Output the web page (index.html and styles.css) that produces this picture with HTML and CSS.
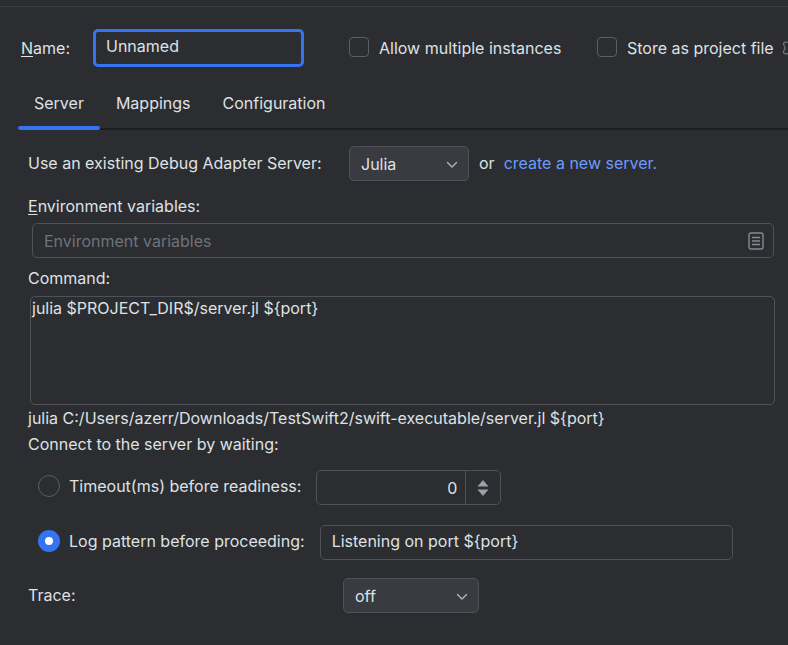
FILE: index.html
```html
<!DOCTYPE html>
<html lang="en">
<head>
<meta charset="utf-8">
<meta name="viewport" content="width=device-width, initial-scale=1">
<title>Run configuration</title>
<link rel="stylesheet" href="styles.css">
</head>
<body>
<form class="dialog">
  <header class="head">
    <label class="name-label" for="name"><span class="mnemonic">N</span>ame:</label>
    <input class="field name-field" id="name" type="text" value="Unnamed">
    <label class="check"><input class="box" type="checkbox">Allow multiple instances</label>
    <label class="check"><input class="box" type="checkbox">Store as project file</label>
    <button class="gear" type="button" aria-label="Storage settings">
      <svg width="18" height="18" viewBox="0 0 18 18" fill="none" stroke="currentColor" stroke-width="1.3" stroke-linejoin="round"><path d="M6.500 3.500 7.300 1.500h3.400l.8 2 2.200-.4 1.700 2.900L14 7.700v2.600l1.400 1.700-1.700 2.900-2.200-.4-.8 2H7.300l-.8-2-2.800.3a2 2 0 0 1-2-3L3 10V8L1.700 5.900a2 2 0 0 1 2-2.700z"/><circle cx="9" cy="9" r="2.500"/></svg>
    </button>
  </header>

  <nav class="tabs" role="tablist">
    <button class="tab active" type="button" role="tab" aria-selected="true">Server</button>
    <button class="tab" type="button" role="tab" aria-selected="false">Mappings</button>
    <button class="tab" type="button" role="tab" aria-selected="false">Configuration</button>
  </nav>

  <main class="panel">
    <div class="row server-row">
      <label class="server-label" for="server">Use an existing Debug Adapter Server:</label>
      <span class="picker server-picker">
        <select class="select" id="server"><option>Julia</option></select>
        <svg class="chevron" width="12" height="8" viewBox="0 0 12 8" fill="none" stroke="currentColor" stroke-width="1.3" stroke-linecap="round" stroke-linejoin="round"><path d="M1.500 1.500 6 6l4.500-4.500"/></svg>
      </span>
      <span class="or">or</span>
      <a class="link" href="#new-server">create a new server.</a>
    </div>

    <label class="caption" for="env"><span class="mnemonic">E</span>nvironment variables:</label>
    <div class="field env">
      <input class="env-input" id="env" type="text" placeholder="Environment variables">
      <button class="env-button" type="button" aria-label="Edit environment variables">
        <svg width="16" height="18" viewBox="0 0 16 18" fill="none" stroke="currentColor" stroke-width="1.400"><rect x="1" y="1" width="14" height="16" rx="2"/><path d="M4 5.500h8M4 9h8M4 12.500h8"/></svg>
      </button>
    </div>

    <label class="caption" for="command">Command:</label>
    <textarea class="field command" id="command" spellcheck="false">julia $PROJECT_DIR$/server.jl ${port}</textarea>
    <p class="line">julia C:/Users/azerr/Downloads/TestSwift2/swift-executable/server.jl ${port}</p>
    <p class="line">Connect to the server by waiting:</p>

    <div class="row option">
      <input class="radio" type="radio" name="wait" id="wait-timeout">
      <label class="option-label" for="wait-timeout">Timeout(ms) before readiness:</label>
      <span class="field spinner">
        <input class="spinner-input" type="text" inputmode="numeric" value="0" aria-label="Timeout in milliseconds">
        <button class="stepper" type="button" aria-label="Change timeout">
          <svg width="12" height="18" viewBox="0 0 12 18" fill="currentColor"><path d="M6 1 11.500 7.500H.5zM6 17 .5 10.500h11z"/></svg>
        </button>
      </span>
    </div>

    <div class="row option">
      <input class="radio" type="radio" name="wait" id="wait-log" checked>
      <label class="option-label" for="wait-log">Log pattern before proceeding:</label>
      <input class="field pattern" type="text" value="Listening on port ${port}" aria-label="Log pattern">
    </div>

    <div class="row trace">
      <label class="trace-label" for="trace">Trace:</label>
      <span class="picker trace-picker">
        <select class="select" id="trace"><option>off</option></select>
        <svg class="chevron" width="12" height="8" viewBox="0 0 12 8" fill="none" stroke="currentColor" stroke-width="1.3" stroke-linecap="round" stroke-linejoin="round"><path d="M1.500 1.500 6 6l4.500-4.500"/></svg>
      </span>
    </div>
  </main>
</form>
</body>
</html>
```

FILE: styles.css
```css
* { box-sizing: border-box; }

body {
  margin: 0;
  overflow-x: hidden;
  background: #2b2d30;
  color: #dfe1e5;
  font: 16px/20px Inter, "Liberation Sans", sans-serif;
}

input, select, textarea, button {
  margin: 0;
  padding: 0;
  border: 0;
  outline: 0;
  background: none;
  color: inherit;
  font: inherit;
}

.dialog { padding-top: 6px; }

.mnemonic {
  text-decoration: underline;
  text-underline-offset: 2px;
  text-decoration-skip-ink: none;
}

.field {
  height: 35px;
  padding: 0 11px;
  border: 1px solid #4e5157;
  border-radius: 5px;
}

.head {
  display: flex;
  align-items: center;
  height: 82px;
  padding-left: 21px;
  border-top: 1px solid #393b40;
  white-space: nowrap;
}

.name-label {
  flex: none;
  width: 72px;
}

.name-field {
  flex: none;
  width: 211px;
  height: 38px;
  margin-right: 45px;
  padding: 0 10px 3px;
  border: 3px solid #3574f0;
}

.check {
  display: flex;
  flex: none;
  align-items: center;
  gap: 10px;
  margin-right: 8px;
}

.name-field + .check { width: 240px; }

.box {
  appearance: none;
  width: 20px;
  height: 20px;
  margin-bottom: 2px;
  border: 1px solid #5a5d63;
  border-radius: 4px;
}

.gear {
  display: flex;
  flex: none;
  color: #6f737a;
}

.tabs {
  display: flex;
  height: 42px;
  margin-left: 18px;
  border-bottom: 2px solid #1e1f22;
}

.tab {
  position: relative;
  height: 42px;
  padding: 0 16px 12px;
}

.tab.active::after {
  content: "";
  position: absolute;
  right: 0;
  bottom: 0;
  left: 0;
  height: 4px;
  border-radius: 2px;
  background: #3574f0;
}

.panel {
  display: flex;
  flex-direction: column;
  padding: 16px 13px 30px 28px;
}

.row {
  display: flex;
  align-items: center;
}

.server-label { width: 321px; }

.server-label, .or, .link, .trace-label { padding-bottom: 2px; }

.picker {
  position: relative;
  display: flex;
  height: 35px;
}

.server-picker { width: 120px; }
.trace-picker { width: 136px; }

.select {
  appearance: none;
  width: 100%;
  padding: 0 11px;
  border: 1px solid #4e5157;
  border-radius: 5px;
  background: #393b40;
}

.chevron {
  position: absolute;
  top: 15px;
  right: 11px;
  color: #b4b8bf;
  pointer-events: none;
}

.or { margin: 0 9px 0 10px; }

.link {
  color: #6b9bfa;
  text-decoration: none;
}

.caption {
  margin-top: 15px;
}

.env {
  display: flex;
  align-items: center;
  margin: 7px 1px 0 4px;
  padding-right: 9px;
}

.env + .caption { margin-top: 10px; }

.env-input { flex: 1; min-width: 0; }
.env-input::placeholder { color: #6f737a; opacity: 1; }

.env-button {
  display: flex;
  color: #868a91;
}

.command {
  height: 109px;
  margin: 8px 0 3px 2px;
  padding: 1px;
  resize: none;
}

.line {
  margin: 0 0 6px;
}

.option {
  height: 35px;
  margin: 10px 42px 0 10px;
}

.option + .option { margin-top: 20px; }

.radio {
  appearance: none;
  width: 22px;
  height: 22px;
  margin: 0 9px 3px 0;
  border: 1px solid #5a5d63;
  border-radius: 50%;
}

.radio:checked {
  border: 7px solid #3574f0;
  background: #fff;
}

.option-label {
  margin: 0 15px 3px 0;
  white-space: nowrap;
}

.spinner {
  display: flex;
  width: 185px;
  padding: 0;
}

.spinner-input {
  flex: 1;
  min-width: 0;
  padding-right: 8px;
  text-align: right;
}

.stepper {
  display: grid;
  place-items: center;
  width: 35px;
  border-left: 1px solid #4e5157;
  color: #9da0a8;
}

.pattern {
  flex: 1;
  min-width: 0;
  padding-bottom: 3px;
}

.trace { margin-top: 18px; }
.trace-label { width: 315px; }
```
